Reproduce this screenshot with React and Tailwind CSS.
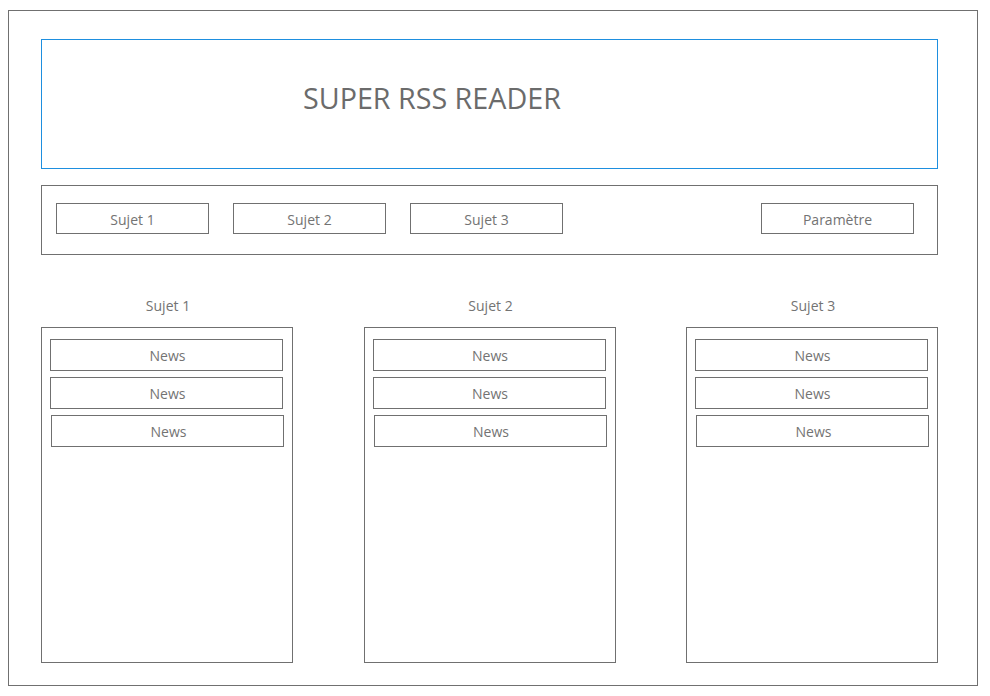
import React from "react";

const font = { fontFamily: '"Open Sans", "Noto Sans", sans-serif' };

function NavButton({ children }) {
  return (
    <div className="w-[153px] h-[31px] border border-[#707070] pt-[2px] flex items-center justify-center text-[14px] text-[#737373]">
      {children}
    </div>
  );
}

function NewsItem({ shift }) {
  return (
    <div
      className={
        "w-[233px] h-[32px] border border-[#707070] pl-[2px] flex items-center justify-center text-[14px] text-[#737373] " +
        (shift ? "ml-[1px]" : "")
      }
    >
      News
    </div>
  );
}

function Column({ title }) {
  return (
    <div className="w-[252px] flex flex-col">
      <div className="h-[20px] leading-[20px] pt-[1px] pl-[2px] text-center text-[14px] text-[#737373]">{title}</div>
      <div className="mt-[12px] h-[336px] border border-[#707070] pt-[11px] pl-[8px] flex flex-col gap-[6px]">
        <NewsItem />
        <NewsItem />
        <NewsItem shift />
      </div>
    </div>
  );
}

export default function App() {
  return (
    <div className="w-[990px] h-[696px] bg-white" style={font}>
      <div className="ml-[8px] pt-[10px]">
        <div className="w-[970px] h-[676px] border border-[#707070] pl-[32px] pt-[28px]">
          <div className="w-[897px] h-[130px] border border-[#1e8fdf] pl-[261px] pt-[39px]">
            <div className="text-[28.7px] leading-[38px] text-[#6b6b6b]">SUPER RSS READER</div>
          </div>
          <div className="mt-[16px] w-[897px] h-[70px] border border-[#707070] pl-[14px] pr-[23px] pt-[17px] flex justify-between items-start">
            <div className="flex gap-[24px]">
              <NavButton>Sujet 1</NavButton>
              <NavButton>Sujet 2</NavButton>
              <NavButton>Sujet 3</NavButton>
            </div>
            <NavButton>Paramètre</NavButton>
          </div>
          <div className="mt-[40px] w-[897px] flex justify-between">
            <Column title="Sujet 1" />
            <Column title="Sujet 2" />
            <Column title="Sujet 3" />
          </div>
        </div>
      </div>
    </div>
  );
}
